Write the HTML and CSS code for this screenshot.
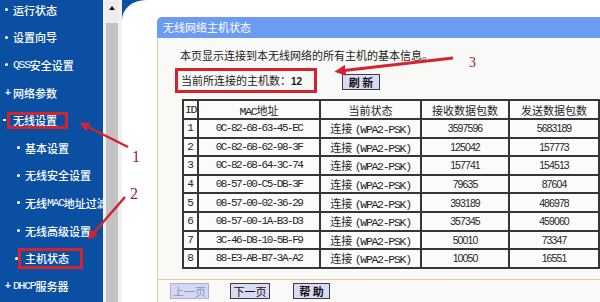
FILE: index.html
```html
<!DOCTYPE html>
<html lang="zh-CN">
<head>
  <meta charset="UTF-8">
  <title>无线网络主机状态</title>
  <link rel="stylesheet" href="styles.css">
</head>
<body>
  <div class="page">
    <nav class="sidebar">
      <ul class="menu">
        <li><span class="bullet"></span>运行状态</li>
        <li><span class="bullet"></span>设置向导</li>
        <li><span class="bullet"></span><span class="asc">QSS</span>安全设置</li>
        <li><span class="plus">+</span>网络参数</li>
        <li class="open"><span class="dash"></span><span class="mark mark-menu">无线设置</span></li>
        <li class="sub"><span class="bullet"></span>基本设置</li>
        <li class="sub"><span class="bullet"></span>无线安全设置</li>
        <li class="sub"><span class="bullet"></span>无线<span class="asc">MAC</span>地址过滤</li>
        <li class="sub"><span class="bullet"></span>无线高级设置</li>
        <li class="sub current"><span class="bullet"></span><span class="mark mark-sub">主机状态</span></li>
        <li><span class="plus">+</span><span class="asc">DHCP</span>服务器</li>
      </ul>
    </nav>
    <div class="gutter"></div>
    <div class="scrollbar">
      <div class="scroll-up"></div>
      <div class="scroll-thumb"></div>
    </div>
    <div class="gutter gutter-wide"></div>

    <main class="content">
      <div class="sheet">
        <section class="panel">
          <h1 class="panel-title">无线网络主机状态</h1>
          <div class="panel-body">
            <p class="intro">本页显示连接到本无线网络的所有主机的基本信息。</p>

            <div class="count-row">
              <span class="mark count">当前所连接的主机数：<b>12</b></span>
              <button class="btn btn-refresh">刷 新</button>
            </div>

            <table class="hosts">
              <colgroup>
                <col style="width:15px">
                <col style="width:122px">
                <col style="width:101px">
                <col style="width:88px">
                <col style="width:90px">
              </colgroup>
              <thead>
                <tr>
                  <th class="asc">ID</th>
                  <th><span class="asc">MAC</span>地址</th>
                  <th>当前状态</th>
                  <th>接收数据包数</th>
                  <th>发送数据包数</th>
                </tr>
              </thead>
              <tbody>
                <tr><td>1</td><td class="mac">0C-82-68-63-45-EC</td><td>连接 <span class="asc">(WPA2-PSK)</span></td><td class="num">3597596</td><td class="num">5683189</td></tr>
                <tr><td>2</td><td class="mac">0C-82-68-62-98-3F</td><td>连接 <span class="asc">(WPA2-PSK)</span></td><td class="num">125042</td><td class="num">157773</td></tr>
                <tr><td>3</td><td class="mac">0C-82-68-64-3C-74</td><td>连接 <span class="asc">(WPA2-PSK)</span></td><td class="num">157741</td><td class="num">154513</td></tr>
                <tr><td>4</td><td class="mac">08-57-00-C5-DB-3F</td><td>连接 <span class="asc">(WPA2-PSK)</span></td><td class="num">79635</td><td class="num">87604</td></tr>
                <tr><td>5</td><td class="mac">08-57-00-02-36-29</td><td>连接 <span class="asc">(WPA2-PSK)</span></td><td class="num">393189</td><td class="num">486978</td></tr>
                <tr><td>6</td><td class="mac">08-57-00-1A-B3-D3</td><td>连接 <span class="asc">(WPA2-PSK)</span></td><td class="num">357345</td><td class="num">459060</td></tr>
                <tr><td>7</td><td class="mac">3C-46-D8-10-5B-F9</td><td>连接 <span class="asc">(WPA2-PSK)</span></td><td class="num">50010</td><td class="num">73347</td></tr>
                <tr><td>8</td><td class="mac">88-E3-AB-B7-3A-A2</td><td>连接 <span class="asc">(WPA2-PSK)</span></td><td class="num">10050</td><td class="num">16551</td></tr>
              </tbody>
            </table>

            <div class="pager">
              <button class="btn btn-page" disabled>上一页</button>
              <button class="btn btn-page">下一页</button>
              <button class="btn btn-help">帮 助</button>
            </div>
          </div>
        </section>
      </div>
    </main>

    <!-- red callouts drawn over the screenshot -->
    <svg class="notes" width="600" height="302" viewBox="0 0 600 302">
      <defs>
        <marker id="head" markerWidth="4" markerHeight="4" refX="2" refY="2" orient="auto" markerUnits="strokeWidth">
          <path d="M0,0 L4,2 L0,4 z" fill="#d3232f"/>
        </marker>
      </defs>
      <line x1="128" y1="147" x2="84" y2="125" stroke="#d3232f" stroke-width="2.5" marker-end="url(#head)"/>
      <line x1="125" y1="197" x2="91" y2="236" stroke="#d3232f" stroke-width="2.5" marker-end="url(#head)"/>
      <line x1="453" y1="58" x2="340" y2="71" stroke="#d3232f" stroke-width="2.8" marker-end="url(#head)"/>
      <text class="note-num" x="132" y="162">1</text>
      <text class="note-num" x="130" y="199">2</text>
      <text class="note-num small" x="469" y="67">3</text>
    </svg>
  </div>
</body>
</html>
```

FILE: styles.css
```css
* {
  box-sizing: border-box;
}

body {
  margin: 0;
  font-family: "Noto Sans CJK SC", sans-serif;
  font-size: 11px;
  color: #1a1a1a;
}

.page {
  position: relative;
  display: flex;
  width: 600px;
  height: 302px;
  overflow: hidden;
  background: #fff;
}

.asc {
  font-family: "Liberation Mono", "Noto Sans CJK SC", monospace;
  font-size: 11.5px;
  letter-spacing: -1.3px;
}

/* left menu */
.sidebar {
  flex: none;
  width: 103px;
  background: #0b4fa3;
  color: #fff;
  overflow: hidden;
}

.menu {
  list-style: none;
  margin: -4px 0 0;
  padding: 0;
}

.menu li {
  display: flex;
  align-items: center;
  height: 27.6px;
  padding-left: 5px;
  white-space: nowrap;
  font-weight: 500;
}

.menu li.sub {
  padding-left: 17px;
}

.bullet {
  flex: none;
  width: 3px;
  height: 3px;
  margin-right: 5px;
  border-radius: 50%;
  background: #fff;
}

.plus {
  width: 8px;
  font-family: "Liberation Sans", sans-serif;
  font-size: 10px;
  font-weight: bold;
  line-height: 1;
}

.menu li.open {
  padding-left: 3px;
}

.dash {
  width: 3px;
  height: 2px;
  margin-right: 1px;
  background: #fff;
}

.menu li.current {
  padding-left: 15px;
}

.menu li.current .bullet {
  margin-right: 0;
}

.mark {
  border: 3px solid #d3232f;
}

.mark-menu {
  height: 17px;
  padding: 0 8px 0 3px;
  line-height: 11px;
}

.mark-sub {
  height: 21px;
  padding: 0 11px 0 4px;
  line-height: 15px;
}

/* scroll strip */
.gutter {
  flex: none;
  width: 3px;
  background: #f1f1f1;
}

.gutter-wide {
  width: 4px;
}

.scrollbar {
  flex: none;
  display: flex;
  flex-direction: column;
  width: 12px;
  background: #c2c2c2;
}

.scroll-up {
  display: flex;
  justify-content: center;
  height: 23px;
  padding-top: 6px;
  background: #ececec;
}

.scroll-up::before {
  content: "";
  width: 0;
  height: 0;
  border-left: 3px solid transparent;
  border-right: 3px solid transparent;
  border-bottom: 4px solid #111;
}

/* main area */
.content {
  flex: 1;
  background: #0b4fa3;
}

.sheet {
  height: 100%;
  padding: 17px 0 0 35px;
  background: #fff;
  border-top-left-radius: 24px 20px;
}

.panel {
  display: flex;
  flex-direction: column;
  height: 100%;
}

.panel-title {
  margin: 0;
  height: 21px;
  padding-left: 6px;
  background: #6b9cf2;
  border-top-left-radius: 5px;
  color: #fff;
  font-size: 11px;
  font-weight: normal;
  line-height: 21px;
}

.panel-body {
  flex: 1;
  padding-top: 10px;
  background: #f9f9f7;
  border-left: 1px solid #e2cba6;
}

.intro {
  margin: 0 0 0 22px;
  line-height: 14px;
}

.count-row {
  display: flex;
  align-items: center;
  margin: 6px 0 0 17px;
}

.count {
  width: 142px;
  height: 25px;
  padding-left: 3px;
  line-height: 19px;
}

.count b {
  font-family: "Liberation Sans", sans-serif;
  font-size: 10px;
}

.btn {
  padding: 0;
  height: 16px;
  background: #d9daf3;
  border: 1px solid #3b3b4b;
  color: #111;
  font-family: "Noto Sans CJK SC", sans-serif;
  font-size: 11px;
  line-height: 14px;
}

.btn-refresh {
  width: 38px;
  margin: 3px 0 0 25px;
  font-weight: bold;
}

/* host table */
.hosts {
  width: 416px;
  margin: 6px 0 0 24px;
  border-collapse: collapse;
  table-layout: fixed;
}

.hosts th,
.hosts td {
  height: 18.6px;
  padding: 0;
  border: 2px solid #363636;
  background: #fbfbfb;
  color: #262626;
  font-weight: normal;
  text-align: center;
  white-space: nowrap;
  overflow: hidden;
}

.hosts th {
  height: 19px;
}

.hosts td:first-child {
  font-family: "Liberation Mono", monospace;
  font-size: 11px;
}

.hosts .mac {
  font-family: "Liberation Mono", monospace;
  font-size: 11px;
  letter-spacing: -1.5px;
}

.hosts .num {
  font-family: "Liberation Sans", sans-serif;
  font-size: 10.5px;
  letter-spacing: -0.9px;
}

/* bottom buttons */
.pager {
  display: flex;
  align-items: center;
  height: 24px;
  margin-top: 10px;
  padding-left: 12px;
  border-top: 1px solid #e6c79a;
  border-bottom: 1px solid #e6c79a;
}

.btn-page {
  width: 40px;
  margin-right: 21px;
}

.btn-page:disabled {
  width: 39px;
  background: #d3d7f1;
  border-color: #a9afd5;
  color: #8a94c2;
}

.btn-help {
  width: 37px;
  margin-left: 2px;
  font-weight: bold;
}

/* callouts */
.notes {
  position: absolute;
  top: 0;
  left: 0;
  pointer-events: none;
}

.note-num {
  fill: #9b1c2c;
  font-family: "Liberation Serif", serif;
  font-size: 16px;
}

.note-num.small {
  font-size: 14px;
}
```
